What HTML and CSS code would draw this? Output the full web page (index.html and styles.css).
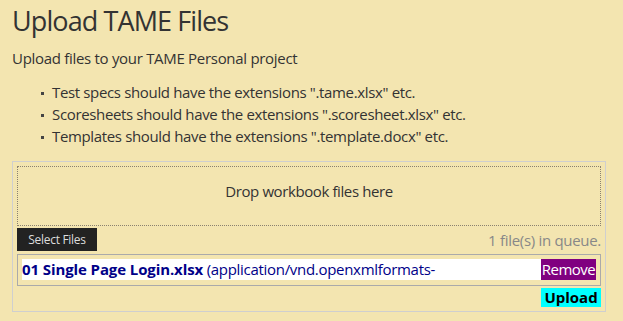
FILE: index.html
```html
<!DOCTYPE html>
<html lang="en">
<head>
<meta charset="utf-8">
<title>Upload TAME Files</title>
<link rel="stylesheet" href="styles.css">
</head>
<body>
<main class="page">
  <h1 class="title">Upload TAME Files</h1>
  <p class="lead">Upload files to your TAME Personal project</p>
  <ul class="rules">
    <li>Test specs should have the extensions ".tame.xlsx" etc.</li>
    <li>Scoresheets should have the extensions ".scoresheet.xlsx" etc.</li>
    <li>Templates should have the extensions ".template.docx" etc.</li>
  </ul>
  <section class="uploader">
    <div class="dropzone">Drop workbook files here</div>
    <div class="toolbar">
      <button class="select-btn" type="button">Select Files</button>
      <span class="queue-count">1 file(s) in queue.</span>
    </div>
    <div class="queue">
      <div class="file">
        <span class="file-info"><b class="file-name">01 Single Page Login.xlsx</b> (application/vnd.openxmlformats-</span>
        <span class="remove">Remove</span>
      </div>
    </div>
    <div class="actions">
      <button class="upload-btn" type="button">Upload</button>
    </div>
  </section>
</main>
</body>
</html>
```

FILE: styles.css
```css
html, body {
  margin: 0;
  padding: 0;
  background: #f3e5b0;
}

body {
  font-family: "Open Sans", "Noto Sans", sans-serif;
  color: #333;
}

.page {
  padding: 0 0 0 12px;
}

.title {
  margin: 0;
  padding-top: 2px;
  font-size: 27px;
  font-weight: 400;
  line-height: 38px;
  letter-spacing: -0.9px;
  color: #333;
}

.lead {
  margin: 7px 0 0;
  font-size: 15px;
  line-height: 22px;
  letter-spacing: -0.3px;
}

.rules {
  margin: 12px 0 0;
  padding-left: 40px;
  font-size: 15px;
  line-height: 22px;
  letter-spacing: -0.35px;
  list-style: none;
}

.rules li {
  position: relative;
}

.rules li::before {
  content: "";
  position: absolute;
  left: -11px;
  top: 11px;
  width: 3px;
  height: 3px;
  background: #444;
}

.uploader {
  box-sizing: border-box;
  width: 594px;
  margin-top: 14px;
  border: 1px solid #cfcfcf;
  padding: 4px;
}

.dropzone {
  box-sizing: border-box;
  height: 60px;
  padding-bottom: 10px;
  border: 1px dotted #8a8170;
  display: flex;
  align-items: center;
  justify-content: center;
  font-size: 15px;
  color: #333;
  letter-spacing: -0.4px;
}

.toolbar {
  margin-top: 2px;
  display: flex;
  justify-content: space-between;
  align-items: center;
}

.select-btn {
  box-sizing: border-box;
  width: 80px;
  height: 23px;
  border: 0;
  padding: 0;
  background: #222;
  color: #ddd;
  font-family: "Open Sans", "Noto Sans", sans-serif;
  font-size: 12px;
  letter-spacing: -0.3px;
}

.queue-count {
  font-size: 15px;
  color: #888;
  letter-spacing: -0.3px;
}

.queue {
  margin-top: 3px;
  border: 1px solid #aaa;
  padding: 4px 4px 5px;
}

.file {
  display: flex;
  justify-content: space-between;
  align-items: stretch;
  height: 21px;
  background: #fff;
  color: #000088;
  font-size: 15px;
  line-height: 21px;
  letter-spacing: -0.3px;
  white-space: nowrap;
}

.file-name {
  font-weight: 700;
  letter-spacing: -0.1px;
}

.remove {
  width: 55px;
  background: #800080;
  color: #fff;
  font-size: 15px;
  text-align: center;
  letter-spacing: -0.5px;
}

.actions {
  margin-top: 2px;
  display: flex;
  justify-content: flex-end;
}

.upload-btn {
  width: 60px;
  height: 19px;
  border: 0;
  padding: 0;
  background: #00ffff;
  color: #000;
  font-family: "Open Sans", "Noto Sans", sans-serif;
  font-weight: 700;
  font-size: 15px;
  line-height: 19px;
}
```
